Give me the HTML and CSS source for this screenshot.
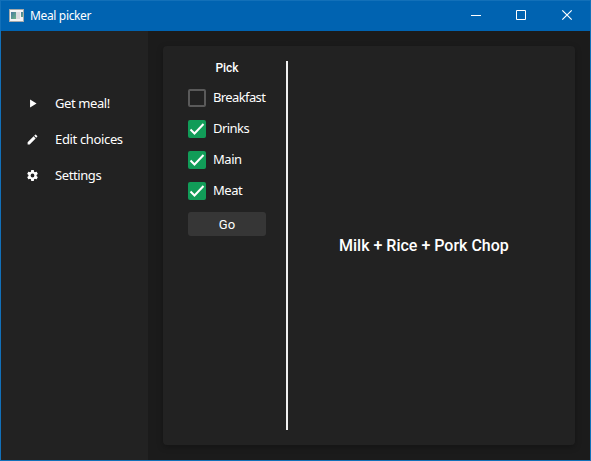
FILE: index.html
```
<!DOCTYPE html>
<html lang="en">
<head>
<meta charset="utf-8">
<title>Meal picker</title>
<link rel="stylesheet" href="styles.css">
</head>
<body>
<div class="window">
  <header class="titlebar">
    <svg class="app-icon" width="15" height="13" viewBox="0 0 15 13">
      <defs><linearGradient id="pane" x1="0" y1="0" x2="1" y2="1"><stop offset="0" stop-color="#4878a0"/><stop offset="1" stop-color="#6cb588"/></linearGradient></defs>
      <rect width="15" height="13" fill="#a5a9ab"/>
      <rect x="1" y="1" width="13" height="11" fill="#f4f4f4"/>
      <rect x="2" y="3" width="5" height="7" fill="url(#pane)"/>
      <rect x="7" y="3" width="4" height="7" fill="#dcdce0"/>
      <rect x="12" y="3" width="2" height="5" fill="url(#pane)"/>
    </svg>
    <span class="title">Meal picker</span>
    <div class="controls">
      <svg width="45" height="30" viewBox="0 0 45 30"><path d="M15 14.500h10" stroke="#fff"/></svg>
      <svg width="45" height="30" viewBox="0 0 45 30"><path d="M15.500 9.500h9v9h-9z" fill="none" stroke="#fff"/></svg>
      <svg width="45" height="30" viewBox="0 0 45 30"><path d="M16.300 9.300l9.400 9.400M25.700 9.300l-9.400 9.400" stroke="#fff" stroke-width="1.200"/></svg>
    </div>
  </header>
  <div class="body">
    <nav class="sidebar">
      <a class="nav-item"><svg width="13" height="13" viewBox="0 0 24 24"><path d="M7.500 4.500v15l12-7.500z"/></svg><span class="t-get">Get meal!</span></a>
      <a class="nav-item"><svg width="13" height="13" viewBox="0 0 24 24"><path d="M3 17.250V21h3.750L17.810 9.940l-3.750-3.750L3 17.250zM20.710 7.040a1 1 0 0 0 0-1.410l-2.340-2.340a1 1 0 0 0-1.410 0l-1.830 1.830 3.750 3.750 1.830-1.830z"/></svg><span class="t-edit">Edit choices</span></a>
      <a class="nav-item"><svg width="13" height="13" viewBox="0 0 24 24"><path d="M19.430 12.980c.04-.32.070-.64.070-.98s-.03-.66-.07-.98l2.110-1.650c.19-.15.240-.42.120-.64l-2-3.460c-.12-.22-.39-.3-.61-.22l-2.490 1c-.52-.4-1.080-.73-1.690-.98l-.38-2.650C14.460 2.180 14.250 2 14 2h-4c-.25 0-.46.180-.49.420l-.38 2.650c-.61.250-1.170.590-1.690.980l-2.490-1c-.23-.09-.49 0-.61.220l-2 3.460c-.13.220-.07.490.120.640l2.110 1.650c-.04.320-.07.650-.07.980s.03.660.070.980l-2.110 1.650c-.19.150-.24.420-.12.640l2 3.460c.12.220.390.300.610.220l2.490-1c.52.400 1.080.730 1.690.980l.38 2.650c.03.240.240.420.490.420h4c.25 0 .46-.18.490-.42l.38-2.650c.61-.25 1.170-.59 1.690-.98l2.490 1c.23.090.490 0 .61-.22l2-3.460c.12-.22.070-.49-.12-.64l-2.110-1.650zM12 15.500a3.500 3.500 0 1 1 0-7 3.500 3.500 0 0 1 0 7z"/></svg><span class="t-set">Settings</span></a>
    </nav>
    <main class="content">
      <section class="card">
        <div class="picker">
          <h2>Pick</h2>
          <label class="option"><span class="box"></span><span class="name t-break">Breakfast</span></label>
          <label class="option"><span class="box checked"><svg width="18" height="18" viewBox="0 0 18 18"><path d="M2.500 9.500l4 4 9-9.500"/></svg></span><span class="name t-drinks">Drinks</span></label>
          <label class="option"><span class="box checked"><svg width="18" height="18" viewBox="0 0 18 18"><path d="M2.500 9.500l4 4 9-9.500"/></svg></span><span class="name">Main</span></label>
          <label class="option"><span class="box checked"><svg width="18" height="18" viewBox="0 0 18 18"><path d="M2.500 9.500l4 4 9-9.500"/></svg></span><span class="name">Meat</span></label>
          <button class="go">Go</button>
        </div>
        <div class="divider"></div>
        <div class="result">Milk + Rice + Pork Chop</div>
      </section>
    </main>
  </div>
</div>
</body>
</html>
```
FILE: styles.css
```
* { box-sizing: border-box; }
body { margin: 0; font-family: "Noto Sans", "Open Sans", sans-serif; color: #fff; }
.window { width: 591px; height: 461px; border: 1px solid #1270b9; background: #1b1b1b; display: flex; flex-direction: column; }
.titlebar { height: 30px; flex: none; background: #0063b1; display: flex; align-items: center; padding-left: 8px; }
.app-icon { margin-top: -2px; }
.title { font-size: 12px; line-height: 16px; margin-left: 6px; letter-spacing: -0.35px; }
.controls { margin: 0 -1px 0 auto; display: flex; }
.controls svg { display: block; }
.body { flex: 1; display: flex; min-height: 0; }
.sidebar { width: 147px; background: #222; padding-top: 54px; }
.nav-item { display: flex; align-items: center; height: 36px; padding-left: 25px; font-size: 13px; white-space: nowrap; }
.nav-item svg { fill: #fff; margin-right: 16px; flex: none; }
.t-get { letter-spacing: -0.4px; }
.t-edit { letter-spacing: -0.35px; }
.t-set { letter-spacing: -0.4px; }
.content { flex: 1; padding: 15px; display: flex; }
.card { flex: 1; background: #222; border-radius: 4px; box-shadow: 0 2px 6px rgba(0, 0, 0, .28); display: flex; padding: 15px 0; }
.picker { width: 123px; padding: 0 20px 0 25px; }
h2 { margin: 0 0 13px; font: 500 12px/15px Roboto, sans-serif; text-align: center; }
.option { display: flex; align-items: center; height: 18px; margin-bottom: 13px; font-size: 13px; white-space: nowrap; }
.name { letter-spacing: -0.45px; padding-bottom: 2px; }
.t-break { letter-spacing: -0.62px; }
.t-drinks { letter-spacing: -0.55px; }
.box { width: 18px; height: 18px; flex: none; border: 2px solid #5a5a5a; border-radius: 2px; margin-right: 7px; }
.checked { border: 0; background: #119c58; }
.box svg { display: block; fill: none; stroke: #fff; stroke-width: 2; }
.go { display: block; width: 78px; height: 24px; margin-top: -1px; padding: 1px 0 0; border: 0; border-radius: 3px; background: #363636; color: #fff; font: 13px/23px Roboto, sans-serif; }
.divider { width: 2px; background: #f0f0f0; }
.result { flex: 1; display: flex; align-items: center; padding-left: 51px; font: 500 16px/20px Roboto, sans-serif; white-space: nowrap; }
```
